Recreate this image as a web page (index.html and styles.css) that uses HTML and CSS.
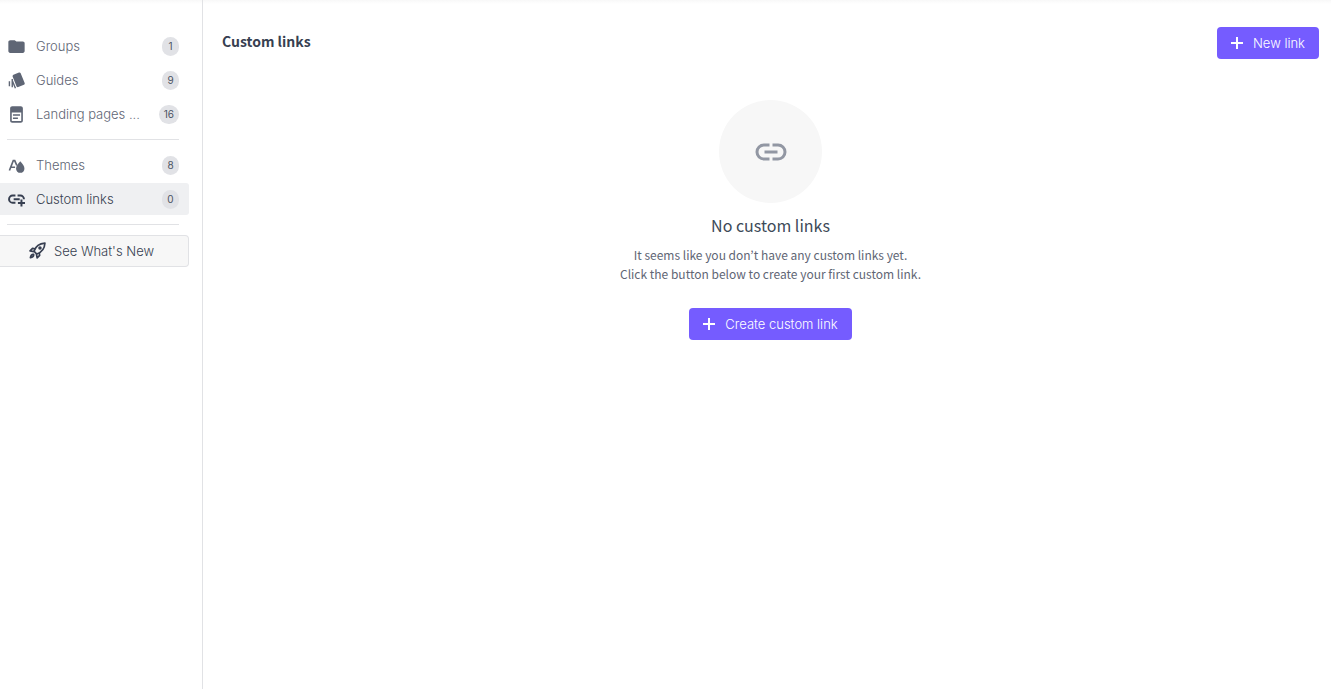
FILE: index.html
```html
<!DOCTYPE html>
<html lang="en">
<head>
  <meta charset="UTF-8" />
  <meta name="viewport" content="width=device-width, initial-scale=1.0" />
  <title>Custom links</title>
  <link rel="stylesheet" href="styles.css">
</head>
<body>
  <aside class="sidebar">
    <nav class="nav">
      <a class="nav-item" href="#groups">
        <svg class="icon" viewBox="0 0 24 24"><path d="M3.500 3h6l2.300 2H21c1.400 0 2.500 1 2.500 2.300v11.200c0 1.400-1.100 2.500-2.500 2.500H3C1.600 21 .5 19.900.5 18.500v-13C.5 4 1.700 3 3.500 3z"/></svg>
        <span class="label">Groups</span>
        <span class="badge">1</span>
      </a>
      <a class="nav-item" href="#guides">
        <svg class="icon" viewBox="0 0 24 24"><path d="M8.500 3.500l7-2.800c1-.4 2 0 2.400 1l5.600 14c.4 1 0 2-1 2.400l-8 3.200c-1 .4-2 0-2.400-1L6.500 6.300c-.4-1 .9-2.400 2-2.800z"/><path d="M6 10v11.500M6 12l4.500 11M2 13v7" fill="none" stroke="currentColor" stroke-width="2"/></svg>
        <span class="label">Guides</span>
        <span class="badge">9</span>
      </a>
      <a class="nav-item" href="#landing">
        <svg class="icon" viewBox="0 0 24 24"><path fill-rule="evenodd" d="M6 .5h12c1.700 0 3 1.200 3 2.800v17.400c0 1.600-1.300 2.800-3 2.800H6c-1.700 0-3-1.200-3-2.800V3.300C3 1.700 4.300.5 6 .5zM5.300 9v11.300c0 .5.300.9.800.9h11.800c.5 0 .8-.4.800-.9V9zM7 11.500h10v2.200H7zm0 4.700h7v2.200H7z"/></svg>
        <span class="label">Landing pages ...</span>
        <span class="badge">16</span>
      </a>
      <hr class="divider">
      <a class="nav-item" href="#themes">
        <svg class="icon" viewBox="0 0 24 24">
          <path d="M2 19L7.500 5h2L12.500 12M4.500 14.500H10" fill="none" stroke="currentColor" stroke-width="2.400"/>
          <path d="M17.300 6c3.500 3.700 5.900 7 5.900 10.500a5.900 5.900 0 0 1-11.800 0c0-3.500 2.400-6.800 5.900-10.500z"/>
        </svg>
        <span class="label">Themes</span>
        <span class="badge">8</span>
      </a>
      <a class="nav-item active" href="#links">
        <svg class="icon" viewBox="0 0 24 24"><path d="M10.500 6.500h-4a5 5 0 0 0 0 10h4M13.500 6.500h4A5 5 0 0 1 22.500 11.500M8 11.500h8.500M19 12v10M14 17h10" fill="none" stroke="currentColor" stroke-width="2.800"/></svg>
        <span class="label">Custom links</span>
        <span class="badge">0</span>
      </a>
      <hr class="divider">
    </nav>
    <button class="whats-new" type="button">
      <svg class="icon" viewBox="0 0 24 24" fill="none" stroke="currentColor" stroke-width="2.400" stroke-linejoin="round">
        <path d="M7 13C9 7 14 2 22.500 1.500C22 10 17 15 11 17z"/>
        <path d="M8.500 9.500L5 9L1.500 12.500L7 13.500M14.500 15.500L15 19L11.500 22.500L10.500 17"/>
        <path d="M6.500 17.500C4 17 2.500 19 2 22C5 21.500 7 20 6.500 17.500z"/>
        <circle cx="15.500" cy="8.500" r="1.300"/>
      </svg>
      See What's New
    </button>
  </aside>

  <main class="content">
    <header class="page-header">
      <h1>Custom links</h1>
      <button class="btn" type="button">
        <svg class="plus" viewBox="0 0 12 12"><path d="M6 0v12M0 6h12"/></svg>
        New link
      </button>
    </header>

    <section class="empty">
      <div class="empty-icon">
        <svg viewBox="0 0 32 18"><path d="M14.500 2H9a7 7 0 0 0 0 14h5.500M17.500 2H23a7 7 0 0 1 0 14h-5.500M9.500 9h13"/></svg>
      </div>
      <h2>No custom links</h2>
      <p>It seems like you don’t have any custom links yet.<br>Click the button below to create your first custom link.</p>
      <button class="btn" type="button">
        <svg class="plus" viewBox="0 0 12 12"><path d="M6 0v12M0 6h12"/></svg>
        Create custom link
      </button>
    </section>
  </main>
</body>
</html>
```

FILE: styles.css
```css
* {
  box-sizing: border-box;
}

body {
  margin: 0;
  min-height: 100vh;
  display: flex;
  font-family: Inter, sans-serif;
  font-size: 13px;
  font-weight: 300;
  color: #373f51;
  background: linear-gradient(#f8f8f8, #fff 4px) no-repeat;
}

/* sidebar */
.sidebar {
  width: 203px;
  flex-shrink: 0;
  padding: 30px 13px 0 0;
  border-right: 1px solid #e1e2e5;
}

.nav {
  display: flex;
  flex-direction: column;
  gap: 2px;
}

.nav-item {
  display: flex;
  align-items: center;
  height: 32px;
  padding: 0 10px 0 8px;
  border-radius: 0 3px 3px 0;
  color: #5f6675;
  text-decoration: none;
}

.nav-item.active {
  background: #eff0f2;
  color: #373f51;
}

.icon {
  width: 17px;
  height: 17px;
  flex-shrink: 0;
  fill: currentColor;
}

.label {
  flex: 1;
  margin-left: 11px;
  line-height: 16px;
  padding-bottom: 1px;
  white-space: nowrap;
}

.badge {
  min-width: 17px;
  height: 19px;
  padding: 0 5px;
  border-radius: 10px;
  background: #e1e2e6;
  color: #4b5262;
  font-size: 10px;
  font-weight: 400;
  line-height: 19px;
  text-align: center;
}

.divider {
  width: auto;
  height: 1px;
  margin: 7px 10px 7px 7px;
  border: none;
  background: #e1e2e5;
}

.whats-new {
  display: flex;
  align-items: center;
  justify-content: center;
  gap: 8px;
  width: 100%;
  height: 32px;
  margin-top: 3px;
  padding: 0 5px 1px 0;
  border: 1px solid #e1e2e5;
  border-left: none;
  border-radius: 0 4px 4px 0;
  background: #f7f7f7;
  color: #373f51;
  font: inherit;
  cursor: pointer;
}

.whats-new .icon {
  fill: none;
}

/* main area */
.content {
  flex: 1;
  padding: 27px 12px 0 19px;
}

.page-header {
  display: flex;
  align-items: flex-start;
  justify-content: space-between;
}

h1,
h2,
p {
  margin: 0;
  font-family: "Source Sans Pro", "Noto Sans CJK KR", sans-serif;
}

h1 {
  font-size: 14px;
  font-weight: 600;
  line-height: 28px;
}

.btn {
  display: flex;
  align-items: center;
  gap: 10px;
  height: 32px;
  padding: 0 14px;
  border: none;
  border-radius: 4px;
  background: #755cff;
  color: #fff;
  font: inherit;
  cursor: pointer;
}

.btn:hover {
  background: #6549f5;
}

.plus {
  width: 12px;
  height: 12px;
  fill: none;
  stroke: currentColor;
  stroke-width: 2;
}

.empty {
  display: flex;
  flex-direction: column;
  align-items: center;
  padding-top: 41px;
}

.empty-icon {
  display: flex;
  align-items: center;
  justify-content: center;
  width: 103px;
  height: 103px;
  border-radius: 50%;
  background: #f7f7f7;
}

.empty-icon svg {
  width: 32px;
  height: 18px;
  fill: none;
  stroke: #9297a3;
  stroke-width: 3;
}

h2 {
  margin-top: 10px;
  font-size: 16px;
  font-weight: 400;
  line-height: 24px;
  color: #3d4a58;
}

p {
  margin: 8px 0 25px;
  font-size: 12px;
  font-weight: 400;
  line-height: 19px;
  text-align: center;
  color: #5f6675;
}
```
